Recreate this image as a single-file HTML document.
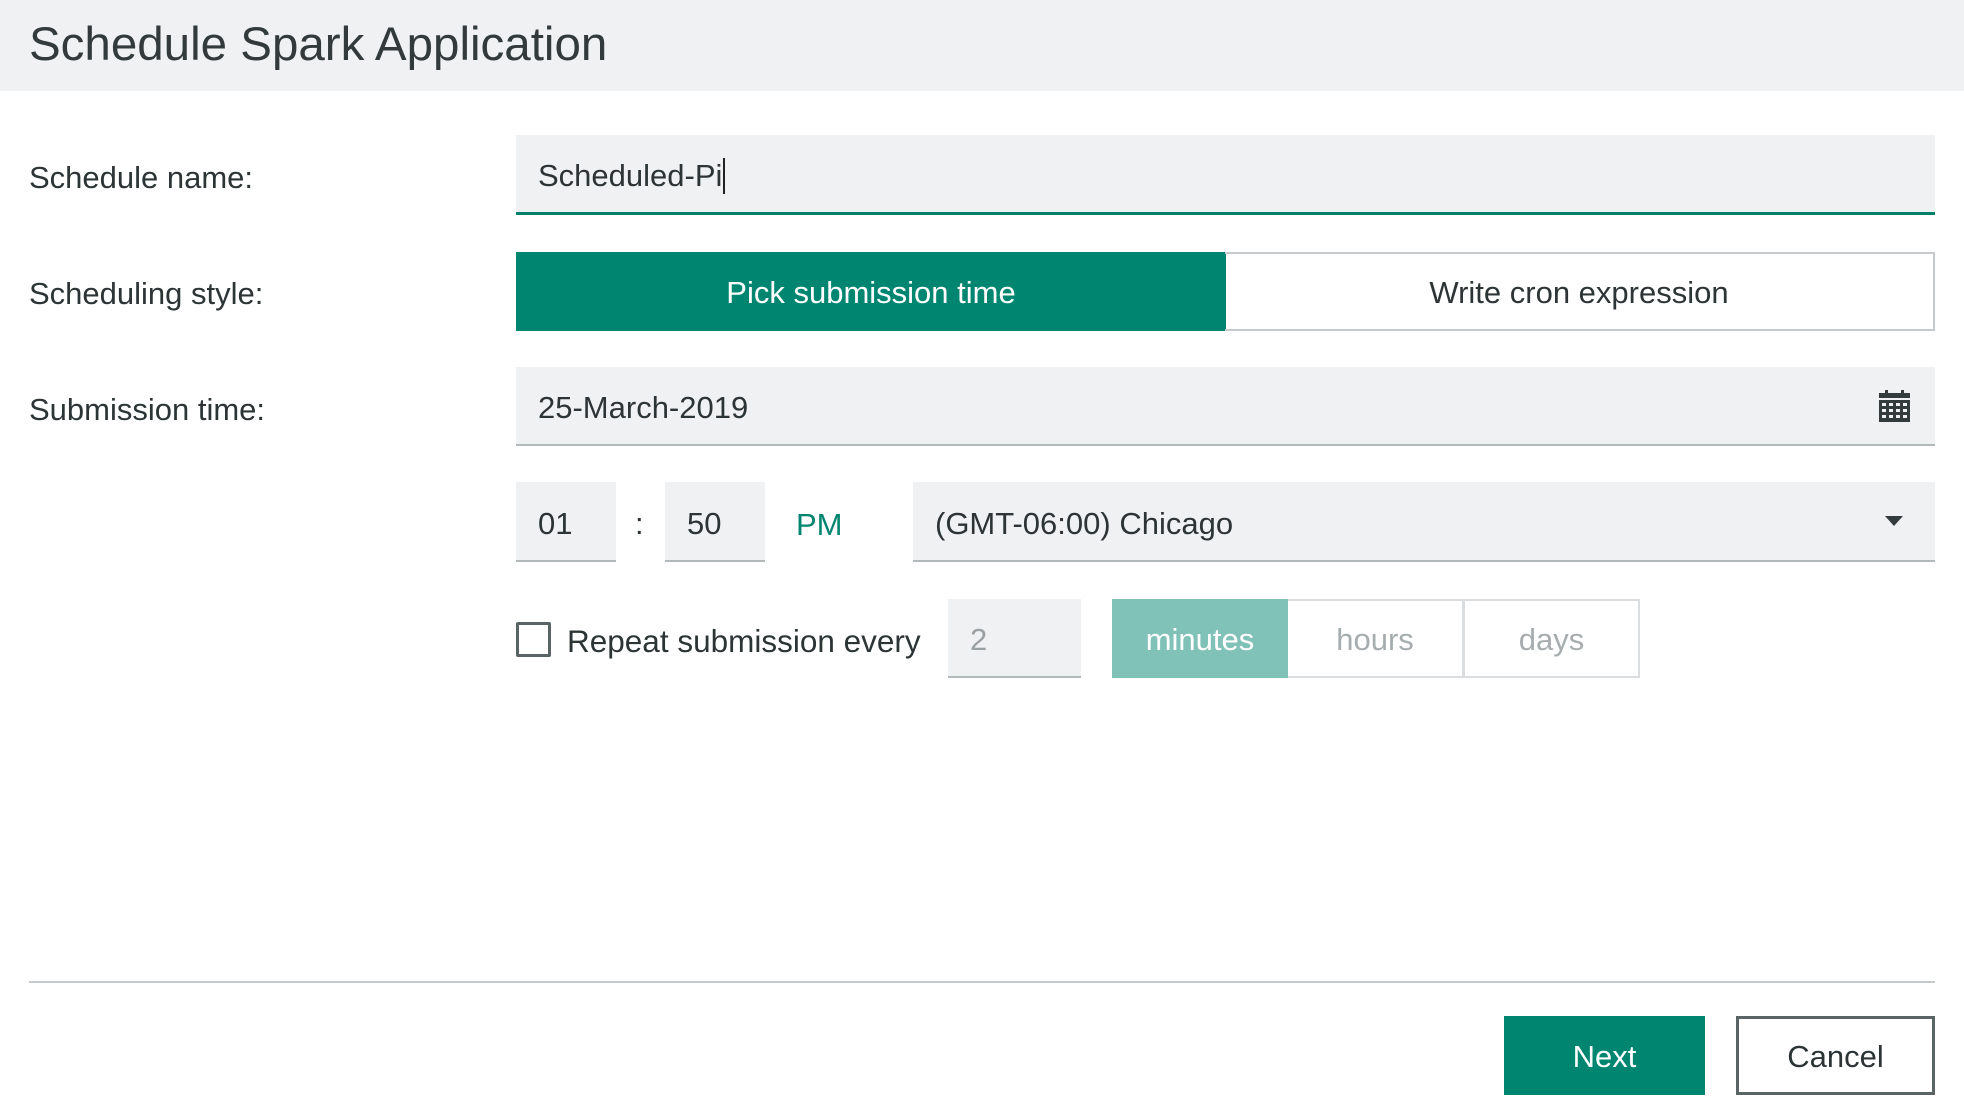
<!DOCTYPE html>
<html><head><style>
*{box-sizing:border-box;margin:0;padding:0}
body{width:1964px;height:1112px;background:#fff;font-family:"Liberation Sans",Arial,sans-serif;color:#2d3436;position:relative;overflow:hidden}
.a{position:absolute}
.hdr{left:0;top:0;width:1964px;height:91px;background:#f0f1f2}
.title{left:29px;top:17px;font-size:47.5px;color:#323a3b}
.lbl{left:29px;font-size:31px;color:#2d3436}
.inp{background:#f0f1f2;border-bottom:2px solid #b3b8ba;font-size:31px;display:flex;align-items:center;padding-left:22px;padding-top:5px}
.seg{display:flex;align-items:center;justify-content:center;font-size:31px;padding-top:3px}
</style></head><body>
<div class="a hdr"></div>
<div class="a title">Schedule Spark Application</div>

<div class="a lbl" style="top:160px">Schedule name:</div>
<div class="a inp" style="left:516px;top:135px;width:1419px;height:80px;border-bottom:3px solid #007f6b">Scheduled-Pi<span style="display:inline-block;width:2px;height:36px;background:#222;margin-left:1px"></span></div>

<div class="a lbl" style="top:276px">Scheduling style:</div>
<div class="a seg" style="left:516px;top:252px;width:710px;height:79px;background:#008571;color:#fff">Pick submission time</div>
<div class="a seg" style="left:1225px;top:252px;width:710px;height:79px;border:2px solid #c6cacc;border-left:none;color:#2d3436">Write cron expression</div>

<div class="a lbl" style="top:392px">Submission time:</div>
<div class="a inp" style="left:516px;top:367px;width:1419px;height:79px">25-March-2019</div>
<svg class="a" style="left:1879px;top:390px" width="31" height="33" viewBox="0 0 31 33"><rect x="6" y="0" width="3" height="6" fill="#333b3d"/><rect x="22" y="0" width="3" height="6" fill="#333b3d"/><rect x="0" y="3" width="31" height="5" fill="#333b3d"/><rect x="0" y="10" width="31" height="22" fill="#333b3d"/><g fill="#f0f1f2"><rect x="3" y="13" width="4" height="3"/><rect x="10" y="13" width="4" height="3"/><rect x="17" y="13" width="4" height="3"/><rect x="24" y="13" width="4" height="3"/><rect x="3" y="19" width="4" height="3"/><rect x="10" y="19" width="4" height="3"/><rect x="17" y="19" width="4" height="3"/><rect x="24" y="19" width="4" height="3"/><rect x="3" y="25" width="4" height="3"/><rect x="10" y="25" width="4" height="3"/><rect x="17" y="25" width="4" height="3"/><rect x="24" y="25" width="4" height="3"/></g></svg>

<div class="a inp" style="left:516px;top:482px;width:100px;height:80px">01</div>
<div class="a" style="left:635px;top:506px;font-size:31px">:</div>
<div class="a inp" style="left:665px;top:482px;width:100px;height:80px">50</div>
<div class="a" style="left:796px;top:507px;font-size:31px;color:#008571">PM</div>
<div class="a inp" style="left:913px;top:482px;width:1022px;height:80px">(GMT-06:00) Chicago</div>
<svg class="a" style="left:1885px;top:516px" width="18" height="10"><path d="M0 0H18L9 10Z" fill="#333b3d"/></svg>

<div class="a" style="left:516px;top:622px;width:35px;height:35px;border:3px solid #5a6366;border-radius:2px"></div>
<div class="a" style="left:567px;top:623px;font-size:31.5px">Repeat submission every</div>
<div class="a inp" style="left:948px;top:599px;width:133px;height:79px;color:#9aa1a3">2</div>
<div class="a seg" style="left:1112px;top:599px;width:176px;height:79px;background:#80c2b8;color:#fff">minutes</div>
<div class="a seg" style="left:1288px;top:599px;width:176px;height:79px;border:2px solid #dadddf;border-left:none;color:#a7adaf">hours</div>
<div class="a seg" style="left:1463px;top:599px;width:177px;height:79px;border:2px solid #dadddf;color:#a7adaf">days</div>

<div class="a" style="left:29px;top:981px;width:1906px;height:2px;background:#c6cacc"></div>
<div class="a seg" style="left:1504px;top:1016px;width:201px;height:79px;background:#008571;color:#fff">Next</div>
<div class="a seg" style="left:1736px;top:1016px;width:199px;height:79px;border:3px solid #5a6366;color:#2d3436">Cancel</div>
</body></html>
